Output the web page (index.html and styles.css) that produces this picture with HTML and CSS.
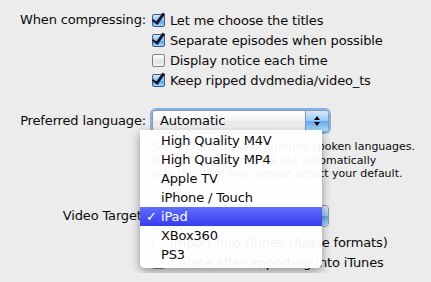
FILE: index.html
```html
<!DOCTYPE html>
<html lang="en">
<head>
    <meta charset="UTF-8">
    <title>Preferences</title>
    <link rel="stylesheet" href="styles.css">
</head>
<body>
    <div class="prefs">
        <div class="row compress">
            <div class="label">When compressing:</div>
            <div class="field">
                <label class="check on"><span class="box"></span>Let me choose the titles</label>
                <label class="check on"><span class="box"></span>Separate episodes when possible</label>
                <label class="check"><span class="box"></span>Display notice each time</label>
                <label class="check on"><span class="box"></span>Keep ripped dvdmedia/video_ts</label>
            </div>
        </div>
        <div class="row lang">
            <div class="label">Preferred language:</div>
            <div class="field">
                <div class="popup focus"><span class="value">Automatic</span><span class="arrows"></span></div>
                <p class="note">Some DVDs include multiple spoken languages.<br>If the DVD player does not automatically<br>pick the right one, please select your default.</p>
                <ul class="menu">
                    <li>High Quality M4V</li>
                    <li>High Quality MP4</li>
                    <li>Apple TV</li>
                    <li>iPhone / Touch</li>
                    <li class="selected">iPad</li>
                    <li>XBox360</li>
                    <li>PS3</li>
                </ul>
            </div>
        </div>
        <div class="row target">
            <div class="label">Video Target:</div>
            <div class="field">
                <div class="popup"><span class="value">iPad</span><span class="arrows"></span></div>
                <label class="check"><span class="box"></span>Import into iTunes (Apple formats)</label>
                <label class="check"><span class="box"></span>Delete after importing into iTunes</label>
            </div>
        </div>
    </div>
</body>
</html>
```

FILE: styles.css
```css
body {
    margin: 0;
    padding: 0;
    background-color: rgb(236, 236, 236);
    font-family: "DejaVu Sans", sans-serif;
    font-size: 13px;
    letter-spacing: -0.15px;
    color: rgb(10, 10, 10);
    overflow: hidden;
}
.prefs {
    padding-top: 10px;
}
.row {
    display: grid;
    grid-template-columns: 146px 182px;
    column-gap: 6px;
}
.label {
    text-align: right;
    line-height: 20px;
    white-space: nowrap;
}
.field {
    position: relative;
}
.check {
    display: flex;
    align-items: center;
    gap: 5px;
    height: 20px;
    white-space: nowrap;
}
.box {
    position: relative;
    width: 11px;
    height: 11px;
    flex: none;
    border: 1px solid rgb(130, 130, 130);
    border-radius: 2px;
    background: linear-gradient(rgb(252, 252, 252), rgb(232, 232, 232) 50%, rgb(222, 222, 222) 51%, rgb(245, 245, 245));
}
.check.on .box {
    border-color: rgb(60, 90, 140);
    background: linear-gradient(rgb(214, 232, 250), rgb(150, 196, 240) 50%, rgb(90, 155, 225) 51%, rgb(160, 215, 250));
}
.check.on .box::after {
    content: "";
    position: absolute;
    left: 2px;
    top: -4px;
    width: 4px;
    height: 11px;
    border-right: 3px solid rgb(15, 25, 50);
    border-bottom: 2.5px solid rgb(15, 25, 50);
    transform: rotate(36deg);
}
.lang {
    margin-top: 20px;
}
.lang .label {
    line-height: 22px;
}
.popup {
    display: flex;
    height: 20px;
    width: 175px;
    border: 1px solid rgb(150, 150, 150);
    border-radius: 4px;
    background: linear-gradient(rgb(255, 255, 255), rgb(244, 244, 244) 50%, rgb(232, 232, 232) 51%, rgb(248, 248, 248));
    overflow: hidden;
}
.popup.focus {
    box-shadow: 0 0 0 2px rgb(130, 178, 235);
}
.popup .value {
    flex: 1;
    padding-left: 7px;
    line-height: 20px;
}
.arrows {
    position: relative;
    width: 22px;
    border-left: 1px solid rgb(120, 150, 200);
    background: linear-gradient(rgb(215, 233, 252), rgb(150, 200, 245) 50%, rgb(100, 165, 235) 51%, rgb(175, 225, 252));
}
.arrows::before,
.arrows::after {
    content: "";
    position: absolute;
    left: 8px;
    border-left: 3px solid transparent;
    border-right: 3px solid transparent;
}
.arrows::before {
    top: 5px;
    border-bottom: 4px solid rgb(10, 10, 10);
}
.arrows::after {
    top: 11px;
    border-top: 4px solid rgb(10, 10, 10);
}
.note {
    margin: 8px 0 0;
    white-space: nowrap;
    font-size: 11px;
    letter-spacing: 0;
    line-height: 13.5px;
}
.menu {
    position: absolute;
    left: -12px;
    top: 20px;
    width: 182px;
    margin: 0;
    padding: 1px 0 4px;
    list-style: none;
    background-color: rgba(255, 255, 255, 0.95);
    border-radius: 0 0 5px 5px;
    box-shadow: 0 3px 10px rgba(0, 0, 0, 0.4);
    z-index: 10;
}
.menu li {
    position: relative;
    height: 19px;
    line-height: 19px;
    padding-left: 21px;
}
.menu li.selected {
    color: white;
    background: linear-gradient(rgb(95, 110, 250), rgb(55, 60, 240));
}
.menu li.selected::before {
    content: "\2713";
    position: absolute;
    left: 6px;
}
.target {
    margin-top: 24px;
}
.target .label {
    line-height: 22px;
}
.target .popup {
    margin-bottom: 6px;
}
```
